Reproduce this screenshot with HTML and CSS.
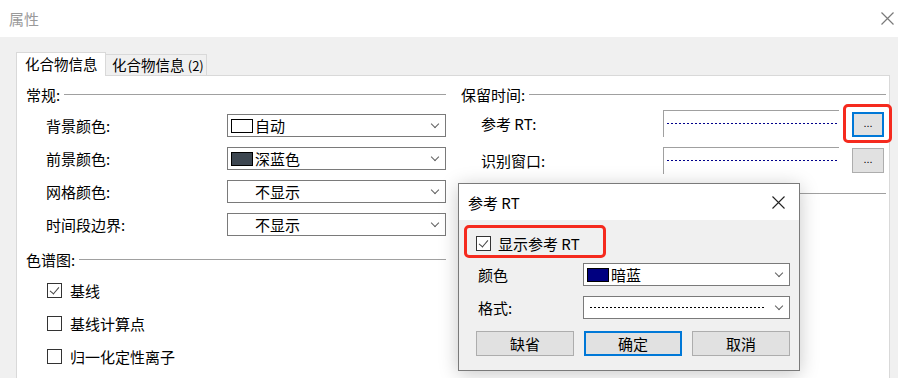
FILE: index.html
```html
<!DOCTYPE html>
<html lang="zh">
<head>
    <meta charset="UTF-8">
    <title>属性</title>
    <link rel="stylesheet" href="styles.css">
</head>
<body>
    <div class="window">
        <div class="titlebar">
            <span class="title">属性</span>
            <svg class="close" width="13" height="13" viewBox="0 0 13 13"><path d="M0.5 0.5 L12.5 12.5 M12.5 0.5 L0.5 12.5" stroke="#7a7a7a" stroke-width="1.2" fill="none"/></svg>
        </div>

        <div class="content">
            <div class="tabs">
                <div class="tab active">化合物信息</div>
                <div class="tab">化合物信息 <span class="num">(2)</span></div>
            </div>

            <div class="panel">
                <div class="col left">
                    <div class="group-head"><span>常规:</span><i class="rule"></i></div>

                    <div class="row">
                        <label class="lbl">背景颜色:</label>
                        <div class="combo"><span class="swatch white"></span>自动<span class="chev"></span></div>
                    </div>
                    <div class="row">
                        <label class="lbl">前景颜色:</label>
                        <div class="combo"><span class="swatch slate"></span>深蓝色<span class="chev"></span></div>
                    </div>
                    <div class="row">
                        <label class="lbl">网格颜色:</label>
                        <div class="combo"><span class="swatch none"></span>不显示<span class="chev"></span></div>
                    </div>
                    <div class="row">
                        <label class="lbl">时间段边界:</label>
                        <div class="combo"><span class="swatch none"></span>不显示<span class="chev"></span></div>
                    </div>

                    <div class="group-head second"><span>色谱图:</span><i class="rule"></i></div>

                    <div class="check-row"><span class="check on"></span>基线</div>
                    <div class="check-row"><span class="check"></span>基线计算点</div>
                    <div class="check-row"><span class="check"></span>归一化定性离子</div>
                </div>

                <div class="col right">
                    <div class="group-head"><span>保留时间:</span><i class="rule"></i></div>

                    <div class="rt-row">
                        <label class="lbl">参考 RT:</label>
                        <div class="field"><i class="dots"></i></div>
                        <span class="marked"><button class="dots-btn focus">...</button></span>
                    </div>
                    <div class="rt-row">
                        <label class="lbl">识别窗口:</label>
                        <div class="field"><i class="dots"></i></div>
                        <button class="dots-btn">...</button>
                    </div>

                    <div class="group-head third"><i class="rule"></i></div>
                </div>
            </div>
        </div>

        <div class="dialog">
            <div class="dlg-title">
                <span>参考 RT</span>
                <svg class="dlg-close" width="13" height="13" viewBox="0 0 13 13"><path d="M0.5 0.5 L12.5 12.5 M12.5 0.5 L0.5 12.5" stroke="#222" stroke-width="1.1" fill="none"/></svg>
            </div>
            <div class="dlg-body">
                <div class="show-rt"><span class="check on"></span>显示参考 RT</div>

                <div class="dlg-row">
                    <label class="dlg-lbl">颜色</label>
                    <div class="combo wide"><span class="swatch navy"></span>暗蓝<span class="chev"></span></div>
                </div>
                <div class="dlg-row">
                    <label class="dlg-lbl">格式:</label>
                    <div class="combo wide"><i class="dash"></i><span class="chev"></span></div>
                </div>

                <div class="dlg-buttons">
                    <button class="btn">缺省</button>
                    <button class="btn default">确定</button>
                    <button class="btn">取消</button>
                </div>
            </div>
        </div>
    </div>
</body>
</html>
```

FILE: styles.css
```css
* {
    margin: 0;
    padding: 0;
    box-sizing: border-box;
}

body {
    font-family: "Noto Sans CJK SC", "Noto Sans", sans-serif;
    font-size: 15px;
    color: #000;
    background: #f0f0f0;
    width: 898px;
    height: 378px;
    overflow: hidden;
}

.window {
    position: relative;
    width: 898px;
    height: 378px;
}

/* title bar */
.titlebar {
    height: 37px;
    background: #fff;
    display: flex;
    align-items: center;
    justify-content: space-between;
    padding: 0 4px 0 9px;
}

.title {
    color: #9a9a9a;
    font-size: 15px;
}

.content {
    padding: 15px 0 0 16px;
}

/* tabs */
.tabs {
    display: flex;
    align-items: flex-end;
    height: 23px;
}

.tab {
    height: 21px;
    width: 101px;
    border: 1px solid #d9d9d9;
    border-left: none;
    border-bottom: none;
    background: #f0f0f0;
    padding-left: 6px;
    line-height: 19px;
    font-size: 14.5px;
}

.tab.active {
    position: relative;
    z-index: 1;
    width: 90px;
    height: 24px;
    margin-bottom: -1px;
    border-left: 1px solid #d9d9d9;
    background: #fff;
    padding-left: 8px;
    line-height: 21px;
}

.num {
    font-size: 13px;
}

/* panel */
.panel {
    width: 874px;
    height: 310px;
    border: 1px solid #d9d9d9;
    background: #fff;
    display: grid;
    grid-template-columns: 435px 1fr;
}

.col.left {
    padding: 0 6px 0 9px;
}

.col.right {
    padding: 0 3px 0 9px;
}

.group-head {
    display: flex;
    align-items: center;
    height: 20px;
    margin-top: 8px;
}

.group-head.second {
    margin-top: 13px;
}

.group-head.third {
    margin-top: 9px;
}

.rule {
    flex: 1;
    height: 1px;
    background: #a0a0a0;
    margin-left: 4px;
}

.row {
    display: flex;
    align-items: center;
    height: 23px;
    margin-top: 10px;
}

.lbl {
    width: 202px;
    padding-left: 20px;
}

/* combo boxes */
.combo {
    width: 220px;
    height: 23px;
    border: 1px solid #7a7a7a;
    background: #fff;
    display: flex;
    align-items: center;
    padding-left: 3px;
}

.combo.wide {
    width: 207px;
}

.swatch {
    width: 22px;
    height: 14px;
    margin-right: 2px;
    border: 1px solid #000;
}

.swatch.white { background: #fff; }
.swatch.slate { background: #3c4650; }
.swatch.navy { background: #000080; }
.swatch.none { border: none; }

.chev {
    margin-left: auto;
    margin-right: 7px;
    width: 6px;
    height: 6px;
    border-right: 1px solid #606060;
    border-bottom: 1px solid #606060;
    transform: rotate(45deg);
    margin-top: -4px;
}

/* checkboxes */
.check-row {
    display: flex;
    align-items: center;
    height: 23px;
    margin-top: 10px;
    padding-left: 21px;
}

.check-row:first-of-type {
    margin-top: 12px;
}

.check {
    position: relative;
    width: 15px;
    height: 15px;
    border: 1px solid #333;
    background: #fff;
    margin-right: 8px;
}

.check.on::after {
    content: "";
    position: absolute;
    left: 4px;
    top: 1px;
    width: 4px;
    height: 8px;
    border-right: 1.5px solid #444;
    border-bottom: 1.5px solid #444;
    transform: rotate(40deg);
}

/* retention time rows */
.rt-row {
    display: flex;
    align-items: center;
    height: 27px;
    margin-top: 6px;
}

.rt-row + .rt-row {
    margin-top: 10px;
}

.field {
    width: 176px;
    height: 27px;
    border-top: 1px solid #a0a0a0;
    border-left: 1px solid #a0a0a0;
    padding: 12px 0 0 3px;
}

.dots {
    display: block;
    height: 1px;
    background: repeating-linear-gradient(90deg, #00008b 0 2px, transparent 2px 4px);
}

.dots-btn {
    width: 32px;
    height: 25px;
    margin-left: 13px;
    background: #e1e1e1;
    border: 1px solid #adadad;
    font-family: "Liberation Sans", sans-serif;
    font-size: 11px;
    color: #000;
    padding-bottom: 4px;
}

.dots-btn.focus {
    border: 2px solid #0078d7;
}

.marked {
    position: relative;
    display: flex;
    margin-top: 2px;
}

.marked::after {
    content: "";
    position: absolute;
    left: 4px;
    right: -8px;
    top: -8px;
    bottom: -6px;
    border: 3px solid #f52a1e;
    border-radius: 5px;
}

/* dialog */
.dialog {
    position: absolute;
    left: 458px;
    top: 183px;
    width: 342px;
    height: 188px;
    border: 1px solid #7a7a7a;
    background: #f0f0f0;
    box-shadow: 0 3px 18px rgba(0, 0, 0, 0.22);
    z-index: 5;
}

.dlg-title {
    height: 36px;
    background: #fff;
    display: flex;
    align-items: center;
    justify-content: space-between;
    padding: 0 14px 0 9px;
    font-size: 15px;
}

.dlg-body {
    padding: 5px 0 0 5px;
}

.show-rt {
    position: relative;
    display: flex;
    align-items: center;
    width: 142px;
    height: 33px;
    padding-left: 12px;
    padding-top: 3px;
}

.show-rt::after {
    content: "";
    position: absolute;
    inset: 0;
    border: 3px solid #f52a1e;
    border-radius: 5px;
}

.show-rt .check {
    margin-right: 7px;
}

.dlg-row {
    display: flex;
    align-items: center;
    height: 23px;
    margin-top: 10px;
}

.show-rt + .dlg-row {
    margin-top: 5px;
}

.dlg-lbl {
    width: 119px;
    padding-left: 14px;
}

.dash {
    display: block;
    width: 174px;
    height: 1px;
    margin-left: 3px;
    background: repeating-linear-gradient(90deg, #000 0 2px, transparent 2px 4px);
}

.dlg-buttons {
    display: flex;
    gap: 10px;
    margin-top: 12px;
    padding-left: 12px;
}

.btn {
    width: 98px;
    height: 25px;
    background: #e1e1e1;
    border: 1px solid #adadad;
    font-family: "Noto Sans CJK SC", sans-serif;
    font-size: 15px;
    color: #000;
}

.btn.default {
    border: 2px solid #0078d7;
}
```
